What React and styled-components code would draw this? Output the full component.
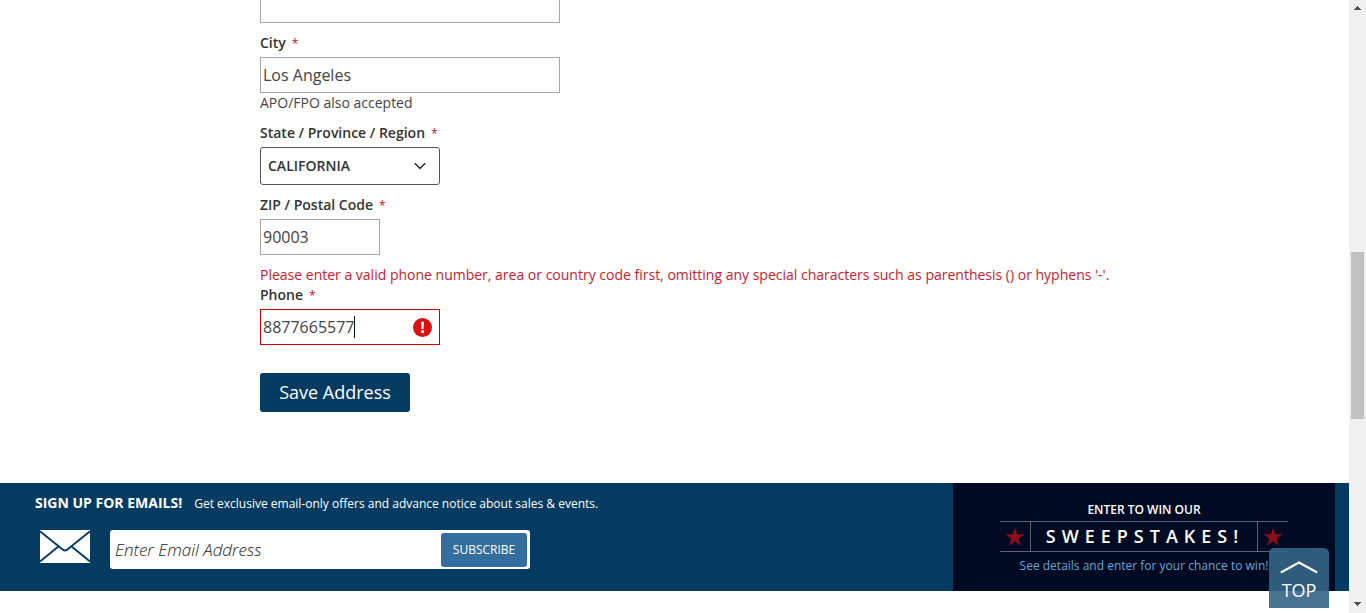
import React from "react";
import styled, { createGlobalStyle } from "styled-components";

const GlobalStyle = createGlobalStyle`
  *, *::before, *::after { box-sizing: border-box; }
  body {
    margin: 0;
    background: #fff;
    color: #333;
    font-family: "Open Sans", "Noto Sans", sans-serif;
    font-size: 14px;
    line-height: 20px;
  }
  button, input, select { font-family: inherit; margin: 0; }
`;

const Viewport = styled.div`
  display: grid;
  grid-template-columns: minmax(0, 1fr) 17px;
  height: 100vh;
  overflow: hidden;
`;

const Page = styled.main`
  position: relative;
  overflow: hidden;
`;

const AddressForm = styled.form`
  display: flex;
  flex-direction: column;
  align-items: flex-start;
  gap: 10px;
  margin: -13px 0 71px;
  padding-left: 260px;
`;

const Field = styled.div`
  display: flex;
  flex-direction: column;
  align-items: flex-start;
`;

const Label = styled.label`
  margin-bottom: 4px;
  font-weight: 600;
`;

const Required = styled.span`
  margin-left: 6px;
  color: #c4122f;
  font-size: 12px;
  font-weight: 400;
  line-height: 12px;
`;

const TextInput = styled.input`
  width: ${(p) => p.$width};
  height: 36px;
  padding: 0 2px;
  border: 1px solid ${(p) => (p.$invalid ? "#c00" : "#a6a6a6")};
  border-radius: 0;
  outline: 0;
  background: #fff;
  color: #444;
  font-size: 16px;
  font-weight: 400;
  caret-color: transparent;
`;

const Hint = styled.span`
  color: #444;
  font-weight: 400;
`;

const ErrorText = styled.p`
  margin: 0;
  color: #c81a30;
  font-weight: 400;
`;

const SelectBox = styled.div`
  position: relative;
  width: 180px;
`;

const Select = styled.select`
  display: block;
  width: 100%;
  height: 38px;
  padding: 0 32px 2px 7px;
  border: 1px solid #555;
  border-radius: 3px;
  background: #fff;
  color: #333;
  font-size: 14px;
  font-weight: 600;
  appearance: none;
`;

const SelectArrow = styled.svg`
  position: absolute;
  top: 15px;
  right: 14px;
  pointer-events: none;
`;

const PhoneBox = styled.div`
  position: relative;
`;

const Caret = styled.span`
  position: absolute;
  top: 7px;
  left: 94px;
  width: 1px;
  height: 22px;
  background: #111;
`;

const AlertIcon = styled.svg`
  position: absolute;
  top: 9px;
  right: 8px;
`;

const SaveButton = styled.button`
  width: 150px;
  height: 39px;
  margin-top: 18px;
  padding: 0 0 2px;
  border: 0;
  border-radius: 3px;
  background: #053b61;
  color: #fff;
  font-size: 18px;
`;

const Footer = styled.footer`
  display: grid;
  grid-template-columns: minmax(0, 1fr) 382px;
  min-height: 108px;
  padding-right: 14px;
  background: #053b61;
  color: #fff;
`;

const SignUp = styled.section`
  padding: 10px 35px;
`;

const SignUpHeading = styled.div`
  display: flex;
  align-items: baseline;
  gap: 12px;
`;

const SignUpTitle = styled.h2`
  margin: 0;
  font-size: 14px;
  font-weight: 700;
  line-height: 20px;
`;

const SignUpText = styled.p`
  margin: 0;
  font-size: 12px;
`;

const EmailRow = styled.form`
  display: flex;
  align-items: flex-start;
  gap: 20px;
  margin-top: 16px;
  padding-left: 5px;
`;

const EmailBox = styled.div`
  display: flex;
  width: 420px;
  height: 39px;
  padding: 3px;
  border-radius: 3px;
  background: #fff;
`;

const EmailInput = styled.input`
  flex: 1;
  min-width: 0;
  padding: 0 2px;
  border: 0;
  background: transparent;
  font-size: 17px;
  &::placeholder {
    color: #222;
    font-style: italic;
    font-weight: 300;
    opacity: 1;
  }
`;

const SubscribeButton = styled.button`
  width: 86px;
  height: 34px;
  padding: 0 0 2px;
  border: 0;
  border-radius: 3px;
  background: #336e9f;
  color: #fff;
  font-size: 12px;
`;

const Sweepstakes = styled.section`
  display: flex;
  flex-direction: column;
  align-items: center;
  padding-top: 17px;
  background: #000a23;
`;

const SweepLead = styled.p`
  margin: 0;
  font-size: 12px;
  font-weight: 600;
`;

const SweepBanner = styled.div`
  display: grid;
  grid-template-columns: 30px 228px 30px;
  height: 31px;
  margin: 1px 0 4px;
  border: 1px solid #5c6375;
  border-width: 1px 0;
`;

const StarCell = styled.span`
  display: grid;
  place-items: center;
`;

const SweepTitle = styled.strong`
  padding-left: 2px;
  border: 1px solid #5c6375;
  border-width: 0 1px;
  font-size: 18px;
  font-weight: 600;
  line-height: 29px;
  letter-spacing: 6px;
  text-align: center;
`;

const SweepLink = styled.a`
  color: #6ba5cf;
  font-size: 12px;
  text-decoration: none;
`;

const TopButton = styled.button`
  position: absolute;
  right: 20px;
  bottom: 5px;
  display: flex;
  flex-direction: column;
  align-items: center;
  gap: 4px;
  width: 60px;
  height: 60px;
  padding: 13px 0 0;
  border: 0;
  border-radius: 5px 5px 0 0;
  background: rgba(52, 101, 134, 0.9);
  color: #fff;
  font-size: 18px;
  line-height: 24px;
`;

const ScrollTrack = styled.div`
  display: flex;
  flex-direction: column;
  align-items: center;
  justify-content: space-between;
  padding: 6px 0;
  background: #f0f0f0;
`;

const ScrollThumb = styled.div`
  width: 13px;
  height: 167px;
  margin-top: 57px;
  background: #c1c1c1;
`;

function Star() {
  return (
    <StarCell>
      <svg width="20" height="20" viewBox="0 0 20 20" aria-hidden="true">
        <path
          d="M10 .4 12.2 7.2H19.6L13.6 11.5 15.9 18.8 10 14.3 4.1 18.8 6.4 11.5.4 7.2H7.8Z"
          fill="#8d0d1b"
        />
      </svg>
    </StarCell>
  );
}

function FieldLabel({ htmlFor, children }) {
  return (
    <Label htmlFor={htmlFor}>
      {children}
      <Required>*</Required>
    </Label>
  );
}

export default function App() {
  return (
    <Viewport>
      <GlobalStyle />
      <Page>
        <AddressForm>
          <TextInput $width="300px" aria-label="Address line 2" />
          <Field>
            <FieldLabel htmlFor="city">City</FieldLabel>
            <TextInput id="city" $width="300px" defaultValue="Los Angeles" />
            <Hint>APO/FPO also accepted</Hint>
          </Field>
          <Field>
            <FieldLabel htmlFor="state">State / Province / Region</FieldLabel>
            <SelectBox>
              <Select id="state" defaultValue="CA">
                <option value="CA">CALIFORNIA</option>
              </Select>
              <SelectArrow width="12" height="8" viewBox="0 0 12 8" aria-hidden="true">
                <path d="M.8 1.2 6 6.4 11.2 1.2" fill="none" stroke="#333" strokeWidth="1.5" />
              </SelectArrow>
            </SelectBox>
          </Field>
          <Field>
            <FieldLabel htmlFor="zip">ZIP / Postal Code</FieldLabel>
            <TextInput id="zip" $width="120px" defaultValue="90003" />
          </Field>
          <Field>
            <ErrorText id="phone-error">
              Please enter a valid phone number, area or country code first, omitting any special
              characters such as parenthesis () or hyphens '-'.
            </ErrorText>
            <FieldLabel htmlFor="phone">Phone</FieldLabel>
            <PhoneBox>
              <TextInput
                id="phone"
                type="tel"
                $width="180px"
                $invalid
                aria-invalid="true"
                aria-describedby="phone-error"
                defaultValue="8877665577"
              />
              <Caret />
              <AlertIcon width="19" height="19" viewBox="0 0 19 19" aria-hidden="true">
                <circle cx="9.5" cy="9.5" r="9.5" fill="#dc0f14" />
                <path d="M8 3.8h3l-.5 7.2h-2Z" fill="#fff" />
                <circle cx="9.5" cy="13.7" r="1.6" fill="#fff" />
              </AlertIcon>
            </PhoneBox>
          </Field>
          <SaveButton type="button">Save Address</SaveButton>
        </AddressForm>

        <Footer>
          <SignUp>
            <SignUpHeading>
              <SignUpTitle>SIGN UP FOR EMAILS!</SignUpTitle>
              <SignUpText>
                Get exclusive email-only offers and advance notice about sales &amp; events.
              </SignUpText>
            </SignUpHeading>
            <EmailRow>
              <svg width="50" height="33" viewBox="0 0 50 33" aria-hidden="true">
                <path d="M0 0h50v33H0Z" fill="#fff" />
                <path
                  d="M0 1.2 22.6 19.4Q25 21.4 27.4 19.4L50 1.2M0 31.6 18.4 16.6M50 31.6 31.6 16.6"
                  fill="none"
                  stroke="#053b61"
                  strokeWidth="1.9"
                />
              </svg>
              <EmailBox>
                <EmailInput
                  type="email"
                  aria-label="Email address"
                  placeholder="Enter Email Address"
                />
                <SubscribeButton type="button">SUBSCRIBE</SubscribeButton>
              </EmailBox>
            </EmailRow>
          </SignUp>
          <Sweepstakes>
            <SweepLead>ENTER TO WIN OUR</SweepLead>
            <SweepBanner>
              <Star />
              <SweepTitle>SWEEPSTAKES!</SweepTitle>
              <Star />
            </SweepBanner>
            <SweepLink href="#sweepstakes">See details and enter for your chance to win!</SweepLink>
          </Sweepstakes>
        </Footer>

        <TopButton type="button">
          <svg width="38" height="13" viewBox="0 0 38 13" aria-hidden="true">
            <path d="M.8 11.5 19 1.5 37.2 11.5" fill="none" stroke="#fff" strokeWidth="2" />
          </svg>
          <span>TOP</span>
        </TopButton>
      </Page>
      <ScrollTrack aria-hidden="true">
        <svg width="7" height="5" viewBox="0 0 7 5" shapeRendering="crispEdges">
          <path d="M3.5 0 7 4H0Z" fill="#505050" />
        </svg>
        <ScrollThumb />
        <svg width="7" height="5" viewBox="0 0 7 5" shapeRendering="crispEdges">
          <path d="M0 0h7L3.5 4Z" fill="#505050" />
        </svg>
      </ScrollTrack>
    </Viewport>
  );
}
